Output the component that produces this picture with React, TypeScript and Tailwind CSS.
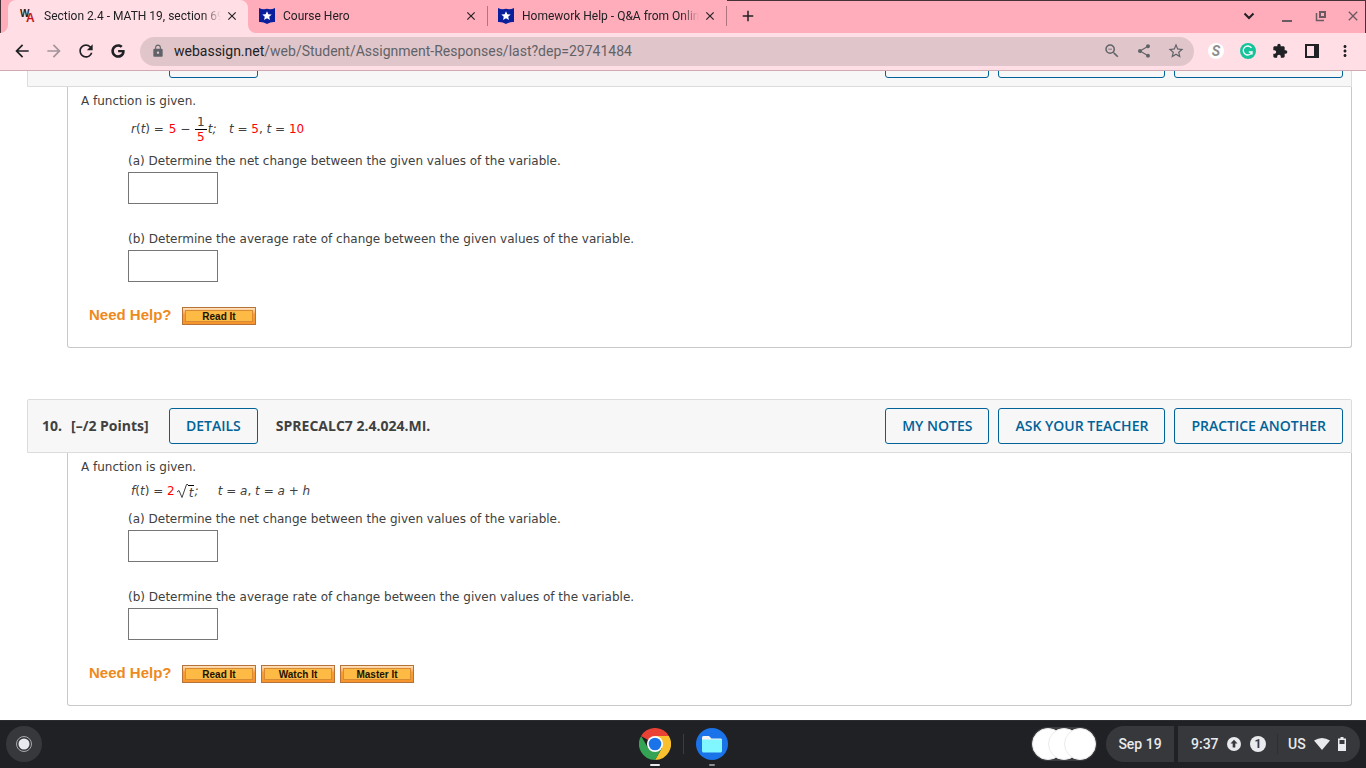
import React from 'react';
import { MdArrowBack, MdArrowForward, MdRefresh, MdLock, MdShare, MdStarBorder, MdExtension, MdMoreVert, MdZoomOut, MdClose, MdAdd } from 'react-icons/md';
import { FaGoogle } from 'react-icons/fa';
const WebAssignIcon = () => <svg viewBox="0 0 16 16" className="w-4 h-4 shrink-0 overflow-visible" aria-hidden="true">
    <text x="0" y="9" fontSize="10" fontWeight="700" fontFamily="Liberation Sans, sans-serif" fill="#222">W</text>
    <text x="6" y="14" fontSize="12" fontWeight="700" fontFamily="Liberation Sans, sans-serif" fill="#c8161d">A</text>
  </svg>;
const CourseHeroIcon = () => <svg viewBox="0 0 16 16" className="w-4 h-4 shrink-0" aria-hidden="true">
    <path d="M0 0 Q4 2 8 .8 Q12 2 16 0 V14 Q12 13.500 8 16 Q4 13.500 0 14 Z" fill="#0a1f9c" />
    <path d="M8 3.200 L9.400 6.300 L12.700 6.600 L10.200 8.800 L11 12.100 L8 10.300 L5 12.100 L5.800 8.800 L3.300 6.600 L6.600 6.300 Z" fill="#fff" />
  </svg>;
const ChromeIcon = () => <svg viewBox="0 0 48 48" className="w-8 h-8" aria-hidden="true">
    <path d="M24 24 L3.200 12 A24 24 0 0 1 44.800 12 Z" fill="#e94235" />
    <path d="M24 12 H44.800 A24 24 0 0 1 24 48 L34.400 30 Z" fill="#fbc02d" />
    <path d="M3.200 12 L13.600 30 L24 36 L34.400 30 L24 48 A24 24 0 0 1 3.200 12 Z" fill="#34a353" />
    <circle cx="24" cy="24" r="12" fill="#fff" />
    <circle cx="24" cy="24" r="9.500" fill="#1a73e8" />
  </svg>;
const FilesIcon = () => <svg viewBox="0 0 32 32" className="w-8 h-8" aria-hidden="true">
    <circle cx="16" cy="16" r="16" fill="#1a73e8" />
    <path d="M6 9.500 Q6 8 7.500 8 H13 L15.500 10.500 H25 Q26 10.500 26 12 V14 H6 Z" fill="#f1f3f4" />
    <path d="M6 11.500 H26 V23 Q26 24.500 24.500 24.500 H7.500 Q6 24.500 6 23 Z" fill="#80f6ff" />
  </svg>;
function Tab({
  title,
  icon,
  active = false
}: {
  title: string;
  icon: React.ReactNode;
  active?: boolean;
}) {
  return <div className={`flex items-center h-[33px] min-w-0 pr-[9px] pb-0.5 ${active ? 'w-[240px] pl-3 bg-[#ffdfe5] rounded-t-lg' : 'w-[228px] pl-0'}`}>
      {icon}
      <a href="#" className="flex-1 ml-2 mr-1 text-xs whitespace-nowrap overflow-hidden mask-r-from-90% mask-r-to-100%">
        {title}
      </a>
      <button aria-label="Close tab" className="shrink-0">
        <MdClose className="w-[14px] h-[14px]" />
      </button>
    </div>;
}
function Browser() {
  return <header className="font-[Roboto,sans-serif] text-[#202124] shrink-0">
      <div className="flex h-[33px] bg-[#ffacbb] border-r border-[#46333a]">
        <div className="w-2 bg-[#ffdfe5]">
          <div className="h-full bg-[#ffacbb] rounded-br-lg border-l border-[#46333a]" />
        </div>
        <Tab active title="Section 2.4 - MATH 19, section 69" icon={<WebAssignIcon />} />
        <div className="w-[11px] bg-[#ffdfe5]">
          <div className="h-full bg-[#ffacbb] rounded-bl-lg" />
        </div>
        <Tab title="Course Hero" icon={<CourseHeroIcon />} />
        <div className="w-px h-5 mt-[6px] mr-[10px] bg-[#b0737f]" />
        <Tab title="Homework Help - Q&A from Online" icon={<CourseHeroIcon />} />
        <div className="w-px h-5 mt-[6px] bg-[#b0737f]" />
        <div className="flex flex-1 items-center justify-between pl-3 pr-2 pb-0.5 border-t border-[#46333a]">
          <button aria-label="New tab"><MdAdd className="w-[18px] h-[18px]" /></button>
          <div className="flex items-center gap-[22px]">
            <button aria-label="Search tabs">
              <svg viewBox="0 0 12 12" className="w-3 h-3"><path d="M1.500 3.500 L6 8 L10.500 3.500" fill="none" stroke="#202124" strokeWidth="2" /></svg>
            </button>
            <button aria-label="Minimize" className="ml-1">
              <svg viewBox="0 0 12 12" className="w-3 h-3"><path d="M1 11 H11" stroke="#6b5a62" strokeWidth="2" /></svg>
            </button>
            <button aria-label="Restore">
              <svg viewBox="0 0 12 12" className="w-3 h-3" fill="none" stroke="#6b5a62"><path d="M5 2 H10 V7 H5 Z" strokeWidth="2" /><path d="M1.500 3 V10.500 H9" strokeWidth="1.500" /></svg>
            </button>
            <button aria-label="Close window" className="-mx-1"><MdClose className="w-4 h-4 text-[#6b5a62]" /></button>
          </div>
        </div>
      </div>
      <div className="flex items-center h-[38px] px-3 bg-[#ffdfe5] border-b border-[#cfaab3]">
        <div className="flex items-center gap-3 pb-px">
          <button aria-label="Back"><MdArrowBack className="w-5 h-5" /></button>
          <button aria-label="Forward"><MdArrowForward className="w-5 h-5 text-[#a4949b]" /></button>
          <button aria-label="Reload"><MdRefresh className="w-5 h-5" /></button>
          <button aria-label="Google"><FaGoogle className="w-5 h-[14px]" /></button>
        </div>
        <div className="flex flex-1 items-center h-[29px] ml-3 pl-[11px] pr-[9px] pb-px rounded-full bg-[#e0c5ca] text-[#5f6368]">
          <MdLock className="w-[14px] h-[14px] shrink-0" />
          <div className="flex-1 ml-[9px] text-sm whitespace-nowrap">
            <span className="text-[#202124]">webassign.net</span>/web/Student/Assignment-Responses/last?dep=29741484
          </div>
          <div className="flex items-center gap-[14px]">
            <button aria-label="Zoom"><MdZoomOut className="w-[18px] h-[18px]" /></button>
            <button aria-label="Share"><MdShare className="w-[18px] h-4" /></button>
            <button aria-label="Bookmark"><MdStarBorder className="w-[18px] h-[18px]" /></button>
          </div>
        </div>
        <div className="flex items-center gap-4 ml-[14px] pb-px">
          <button aria-label="S extension" className="w-4 h-4 rounded-full bg-white text-[#8d8d8d] text-sm leading-4 font-bold italic">S</button>
          <button aria-label="Grammarly">
            <svg viewBox="0 0 16 16" className="w-4 h-4"><circle cx="8" cy="8" r="8" fill="#15c39a" /><path d="M11.500 5 A4.500 4.500 0 1 0 12 9 H8.800 M12 9 V11.500" fill="none" stroke="#fff" strokeWidth="1.300" /></svg>
          </button>
          <button aria-label="Extensions"><MdExtension className="w-4 h-4" /></button>
          <button aria-label="Side panel">
            <svg viewBox="0 0 16 16" className="w-4 h-4"><path d="M1 1 H15 V15 H1 Z" fill="#202124" /><path d="M3 3 H10 V13 H3 Z" fill="#ffdfe5" /></svg>
          </button>
          <button aria-label="Menu"><MdMoreVert className="w-[18px] h-[18px]" /></button>
        </div>
      </div>
    </header>;
}
const outlineButton = 'h-9 px-4 border border-[#006298] rounded-[3px] bg-[#f7f7f7] text-[#006298] font-semibold';
function Question({
  number,
  code,
  equation,
  help
}: {
  number: string;
  code: string;
  equation: React.ReactNode;
  help: string[];
}) {
  return <section className="mb-[51px] ml-[27px] mr-[14px] text-[#404040]">
      <div className="flex items-center justify-between h-[54px] pl-[14px] pr-2 border border-[#dcdcdc] rounded-t-[2px] bg-[#f7f7f7] font-['Open_Sans',sans-serif] text-sm">
        <h2 className="flex items-center font-bold">
          <span className="w-[29px] font-['Noto_Sans',sans-serif]">{number}.</span>
          <span className="w-[98px]">[–/2 Points]</span>
          <button className={outlineButton}>DETAILS</button>
          <span className="ml-[18px]">{code}</span>
        </h2>
        <div className="flex gap-[9px]">
          <button className={outlineButton}>MY NOTES</button>
          <button className={outlineButton}>ASK YOUR TEACHER</button>
          <button className={outlineButton}>PRACTICE ANOTHER</button>
        </div>
      </div>
      <div className="ml-10 pl-[13px] pt-[6px] pb-[22px] border border-t-0 border-[#c8c8c8] rounded-b-[3px] font-['DejaVu_Sans',sans-serif] text-xs leading-4">
        <p>A function is given.</p>
        <div className="ml-[47px]">
          <div className="mt-2 mb-3 ml-[3px]">{equation}</div>
          <label className="block">
            (a) Determine the net change between the given values of the variable.
            <input type="text" className="block w-[90px] h-8 mt-[3px] px-1 border border-[#767676] bg-white" />
          </label>
          <label className="block mt-[27px]">
            (b) Determine the average rate of change between the given values of the variable.
            <input type="text" className="block w-[90px] h-8 mt-[3px] px-1 border border-[#767676] bg-white" />
          </label>
        </div>
        <div className="flex items-center gap-[5px] mt-6 ml-2 font-['Liberation_Sans',sans-serif]">
          <span className="w-[88px] pb-0.5 text-[15px] leading-[17px] font-bold text-[#ee8a1d]">Need Help?</span>
          {help.map(label => <button key={label} className="w-[74px] h-[18px] p-[2px] border border-[#b5733a] bg-linear-to-b from-[#fde3c0] via-[#f99d35] via-40% to-[#f7942c] text-[10px] text-[#1c1400] font-bold">
              <span className="block h-3 leading-[11px] border border-[#d98b33] bg-[#fdba45]">{label}</span>
            </button>)}
        </div>
      </div>
    </section>;
}
function Shelf() {
  return <footer className="grid grid-cols-[1fr_auto_1fr] items-center h-12 shrink-0 px-[6px] bg-[#202124] border-t border-[#2b2c2f] font-[Roboto,sans-serif] text-sm text-[#e8eaed]">
      <button aria-label="Launcher" className="flex items-center justify-center w-9 h-9 mb-px rounded-full bg-[#37383b]">
        <svg viewBox="0 0 18 18" className="w-[18px] h-[18px]"><circle cx="9" cy="9" r="7.500" fill="none" stroke="#a8aaad" /><circle cx="9" cy="9" r="5.500" fill="#e8eaed" /></svg>
      </button>
      <nav className="flex items-start h-full pt-[7px]">
        <button aria-label="Chrome" className="flex flex-col items-center">
          <ChromeIcon />
          <span className="w-[10px] h-[2px] mt-1 rounded bg-[#e8eaed]" />
        </button>
        <div className="w-px h-5 mt-[6px] mx-3 bg-[#3c3d40]" />
        <button aria-label="Files" className="flex flex-col items-center">
          <FilesIcon />
          <span className="w-[6px] h-[2px] mt-1 rounded bg-[#8d8f92]" />
        </button>
      </nav>
      <div className="flex items-center justify-end h-9 mb-px font-medium">
        <button aria-label="Recent captures" className="flex mr-[9px] p-px rounded-full bg-[#3c3d40]">
          <span className="w-8 h-8 rounded-full bg-white border border-[#ececec]" />
          <span className="w-8 h-8 -ml-4 rounded-full bg-white border border-[#ececec]" />
          <span className="w-8 h-8 -ml-4 rounded-full bg-white border border-[#ececec]" />
        </button>
        <button className="h-9 w-[68px] mr-1 rounded-l-full rounded-r bg-[#37383b]">Sep 19</button>
        <button className="flex items-center h-9 w-[182px] pl-[13px] rounded-r-full rounded-l bg-[#37383b]">
          <span className="w-9 text-left">9:37</span>
          <svg viewBox="0 0 16 16" className="w-[14px] h-[14px]"><circle cx="8" cy="8" r="8" fill="#e8eaed" /><path d="M8 3 L12 7.500 H9.500 V12 H6.500 V7.500 H4 Z" fill="#37383b" /></svg>
          <span className="w-4 h-4 ml-[9px] rounded-full bg-[#e8eaed] text-[#37383b] text-xs leading-4 font-bold">1</span>
          <span className="w-px h-5 ml-[11px] mr-[10px] bg-[#2d2e31]" />
          <span>US</span>
          <svg viewBox="0 0 16 12" className="w-4 h-3 ml-2"><path d="M0 2.500 Q8 -2.500 16 2.500 L8 12 Z" fill="#e8eaed" /></svg>
          <svg viewBox="0 0 8 14" className="w-2 h-[14px] ml-2"><path d="M2.500 0 H5.500 V1.500 H8 V14 H0 V1.500 H2.500 Z" fill="#e8eaed" /><path d="M1.500 3 H6.500 V7 H1.500 Z" fill="#37383b" /></svg>
        </button>
      </div>
    </footer>;
}
export default function App() {
  return <div className="flex flex-col h-screen bg-white">
      <Browser />
      <main className="flex-1 min-h-0 overflow-hidden">
        <div className="-mt-[38px]">
          <Question number="9" code="SPRECALC7 2.4.022." help={['Read It']} equation={<div className="flex items-center gap-px h-6 whitespace-pre">
                <span><i>r</i>(<i>t</i>) = </span>
                <span><span className="text-[#f00]">5</span> − </span>
                <span className="flex flex-col items-center leading-[14px]">
                  <span className="px-[2px] border-b border-black">1</span>
                  <span className="text-[#f00]">5</span>
                </span>
                <span><i>t;</i>   </span>
                <span><i>t</i> = <span className="text-[#f00]">5</span>, <i>t</i> = <span className="text-[#f00]">10</span></span>
              </div>} />
          <Question number="10" code="SPRECALC7 2.4.024.MI." help={['Read It', 'Watch It', 'Master It']} equation={<div className="flex items-center h-4 whitespace-pre">
                <span className="mr-px"><i>f</i>(<i>t</i>) = <span className="text-[#f00]">2</span></span>
                <svg viewBox="0 0 12 16" className="w-3 h-4"><path d="M1 9 L3 7.500 L6 14.500 L10.500 1.500 H12" fill="none" stroke="#404040" /></svg>
                <span className="mt-[2px] px-px border-t border-black leading-[14px]"><i>t</i></span>
                <span className="mr-1"><i>;</i>    </span>
                <span><i>t</i> = <i>a</i>, <i>t</i> = <i>a</i> + <i>h</i></span>
              </div>} />
        </div>
      </main>
      <Shelf />
    </div>;
}
